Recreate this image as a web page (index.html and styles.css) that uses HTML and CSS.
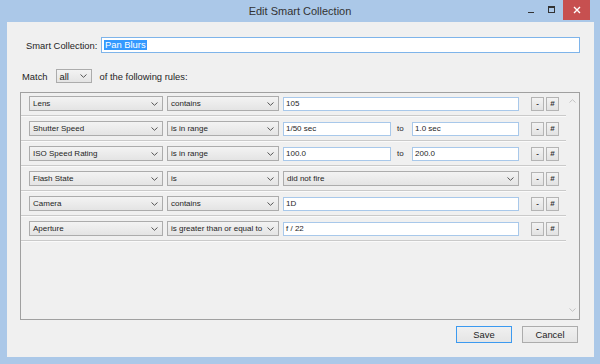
FILE: index.html
```html
<!DOCTYPE html>
<html lang="en">
  <head>
    <meta charset="utf-8" />
    <title>Edit Smart Collection</title>
    <link rel="stylesheet" href="styles.css">
  </head>
  <body>
    <div class="window">
      <div class="titlebar">
        <span></span>
        <span class="title">Edit Smart Collection</span>
        <div class="controls">
          <span class="ctl"><span class="min"></span></span>
          <span class="ctl"><span class="max"></span></span>
          <span class="ctl close">
            <svg width="8" height="8" viewBox="0 0 8 8"><path d="M1 1L7 7M7 1L1 7" stroke="#fff" stroke-width="1.4" /></svg>
          </span>
        </div>
      </div>

      <div class="client">
        <div class="name-row">
          <label class="name-label">Smart Collection:</label>
          <div class="textbox name-box"><span class="selected">Pan Blurs</span></div>
        </div>

        <div class="match-row">
          <span>Match</span>
          <div class="dropdown match-box">
            <span>all</span>
            <svg class="chev" width="7" height="4" viewBox="0 0 7 4"><path d="M0.5 0.5L3.5 3.3L6.5 0.5" fill="none" stroke="#555" /></svg>
          </div>
          <span>of the following rules:</span>
        </div>

        <div class="rules">
          <div class="rule-list">
            <div class="rule">
              <div class="dropdown field"><span>Lens</span><svg class="chev" width="7" height="4" viewBox="0 0 7 4"><path d="M0.5 0.5L3.5 3.3L6.5 0.5" fill="none" stroke="#555" /></svg></div>
              <div class="dropdown op"><span>contains</span><svg class="chev" width="7" height="4" viewBox="0 0 7 4"><path d="M0.5 0.5L3.5 3.3L6.5 0.5" fill="none" stroke="#555" /></svg></div>
              <div class="value"><div class="textbox wide">105</div></div>
              <div class="rule-btns"><span class="mini">-</span><span class="mini">#</span></div>
            </div>
            <div class="rule">
              <div class="dropdown field"><span>Shutter Speed</span><svg class="chev" width="7" height="4" viewBox="0 0 7 4"><path d="M0.5 0.5L3.5 3.3L6.5 0.5" fill="none" stroke="#555" /></svg></div>
              <div class="dropdown op"><span>is in range</span><svg class="chev" width="7" height="4" viewBox="0 0 7 4"><path d="M0.5 0.5L3.5 3.3L6.5 0.5" fill="none" stroke="#555" /></svg></div>
              <div class="value">
                <div class="textbox from">1/50 sec</div>
                <span class="to">to</span>
                <div class="textbox until">1.0 sec</div>
              </div>
              <div class="rule-btns"><span class="mini">-</span><span class="mini">#</span></div>
            </div>
            <div class="rule">
              <div class="dropdown field"><span>ISO Speed Rating</span><svg class="chev" width="7" height="4" viewBox="0 0 7 4"><path d="M0.5 0.5L3.5 3.3L6.5 0.5" fill="none" stroke="#555" /></svg></div>
              <div class="dropdown op"><span>is in range</span><svg class="chev" width="7" height="4" viewBox="0 0 7 4"><path d="M0.5 0.5L3.5 3.3L6.5 0.5" fill="none" stroke="#555" /></svg></div>
              <div class="value">
                <div class="textbox from">100.0</div>
                <span class="to">to</span>
                <div class="textbox until">200.0</div>
              </div>
              <div class="rule-btns"><span class="mini">-</span><span class="mini">#</span></div>
            </div>
            <div class="rule">
              <div class="dropdown field"><span>Flash State</span><svg class="chev" width="7" height="4" viewBox="0 0 7 4"><path d="M0.5 0.5L3.5 3.3L6.5 0.5" fill="none" stroke="#555" /></svg></div>
              <div class="dropdown op"><span>is</span><svg class="chev" width="7" height="4" viewBox="0 0 7 4"><path d="M0.5 0.5L3.5 3.3L6.5 0.5" fill="none" stroke="#555" /></svg></div>
              <div class="value"><div class="dropdown wide"><span>did not fire</span><svg class="chev" width="7" height="4" viewBox="0 0 7 4"><path d="M0.5 0.5L3.5 3.3L6.5 0.5" fill="none" stroke="#555" /></svg></div></div>
              <div class="rule-btns"><span class="mini">-</span><span class="mini">#</span></div>
            </div>
            <div class="rule">
              <div class="dropdown field"><span>Camera</span><svg class="chev" width="7" height="4" viewBox="0 0 7 4"><path d="M0.5 0.5L3.5 3.3L6.5 0.5" fill="none" stroke="#555" /></svg></div>
              <div class="dropdown op"><span>contains</span><svg class="chev" width="7" height="4" viewBox="0 0 7 4"><path d="M0.5 0.5L3.5 3.3L6.5 0.5" fill="none" stroke="#555" /></svg></div>
              <div class="value"><div class="textbox wide">1D</div></div>
              <div class="rule-btns"><span class="mini">-</span><span class="mini">#</span></div>
            </div>
            <div class="rule">
              <div class="dropdown field"><span>Aperture</span><svg class="chev" width="7" height="4" viewBox="0 0 7 4"><path d="M0.5 0.5L3.5 3.3L6.5 0.5" fill="none" stroke="#555" /></svg></div>
              <div class="dropdown op"><span>is greater than or equal to</span><svg class="chev" width="7" height="4" viewBox="0 0 7 4"><path d="M0.5 0.5L3.5 3.3L6.5 0.5" fill="none" stroke="#555" /></svg></div>
              <div class="value"><div class="textbox wide">f / 22</div></div>
              <div class="rule-btns"><span class="mini">-</span><span class="mini">#</span></div>
            </div>
          </div>
          <div class="scrollbar">
            <svg width="7" height="4" viewBox="0 0 7 4"><path d="M0.5 3.5L3.5 0.7L6.5 3.5" fill="none" stroke="#c4c4c4" /></svg>
            <svg width="7" height="4" viewBox="0 0 7 4"><path d="M0.5 0.5L3.5 3.3L6.5 0.5" fill="none" stroke="#c4c4c4" /></svg>
          </div>
        </div>

        <div class="actions">
          <button class="btn primary">Save</button>
          <button class="btn">Cancel</button>
        </div>
      </div>
    </div>
  </body>
</html>
```

FILE: styles.css
```css
html,
body {
  margin: 0;
  height: 100%;
}
body {
  font-family: "Liberation Sans", Arial, sans-serif;
  color: #1e1e1e;
}

.window {
  height: 364px;
  background-color: #abc8e8;
  display: flex;
  flex-direction: column;
}

/* title bar */
.titlebar {
  height: 22px;
  display: grid;
  grid-template-columns: 1fr auto 1fr;
  align-items: start;
}
.title {
  font-size: 11px;
  line-height: 22px;
  color: #333;
}
.controls {
  display: flex;
  justify-content: flex-end;
  padding-right: 10px;
}
.ctl {
  width: 20px;
  height: 20px;
  display: flex;
  align-items: center;
  justify-content: center;
}
.min {
  width: 6px;
  height: 1px;
  margin-top: 5px;
  background-color: #333;
}
.max {
  width: 5px;
  height: 4px;
  margin-top: -2px;
  border: 1px solid #333;
  border-top-width: 2px;
}
.ctl.close {
  width: 27px;
  margin-left: 2px;
  background-color: #c75050;
}

/* client area */
.client {
  flex: 1;
  margin: 0 6px 7px 7px;
  background-color: #f0f0f0;
  display: flex;
  flex-direction: column;
  font-size: 9.4px;
}

.name-row {
  display: flex;
  align-items: center;
  margin: 15px 14px 0 19px;
  height: 16px;
}
.name-label {
  width: 75px;
  flex: none;
}
.textbox {
  box-sizing: border-box;
  background-color: #fff;
  border: 1px solid #a8c8ea;
  display: flex;
  align-items: center;
  padding-left: 2px;
}
.name-box {
  flex: 1;
  height: 16px;
  border-color: #7eb4ea;
}
.selected {
  background-color: #3399ff;
  color: #fff;
  padding: 0 1px;
  line-height: 10px;
}

.match-row {
  display: flex;
  align-items: center;
  gap: 8px;
  margin: 16px 0 0 15px;
  height: 14px;
}

.dropdown {
  box-sizing: border-box;
  height: 15px;
  border: 1px solid #acacac;
  background: linear-gradient(#f3f3f3, #e4e4e4);
  display: flex;
  align-items: center;
  justify-content: space-between;
  gap: 4px;
  padding: 0 4px 0 3px;
  white-space: nowrap;
  overflow: hidden;
}
.chev {
  flex: none;
}
.match-box {
  width: 36px;
  height: 14px;
}

/* rules panel */
.rules {
  margin: 9px 14px 0 13px;
  height: 228px;
  box-sizing: border-box;
  border: 1px solid #a0a0a0;
  display: flex;
}
.rule-list {
  flex: 1;
}
.rule {
  display: flex;
  align-items: center;
  padding: 5px 0 4px 8px;
  border-bottom: 1px solid #cacaca;
  box-shadow: 0 1px 0 #fafafa;
  font-size: 8px;
}
.rule:first-child {
  padding-top: 3px;
}
.field {
  width: 134px;
}
.op {
  width: 112px;
  margin-left: 4px;
}
.value {
  width: 236px;
  margin-left: 4px;
  display: flex;
  align-items: center;
}
.value .textbox {
  height: 14px;
}
.wide {
  width: 236px;
}
.from {
  width: 108px;
}
.to {
  width: 15px;
  padding-left: 6px;
}
.until {
  width: 107px;
}
.rule-btns {
  display: flex;
  gap: 2px;
  margin-left: 12px;
}
.mini {
  box-sizing: border-box;
  width: 13px;
  height: 14px;
  border: 1px solid #b4b4b4;
  background: linear-gradient(#f3f3f3, #e2e2e2);
  display: flex;
  align-items: center;
  justify-content: center;
  font-size: 8px;
  font-weight: bold;
  color: #333;
}

.scrollbar {
  width: 13px;
  display: flex;
  flex-direction: column;
  justify-content: space-between;
  align-items: center;
  padding: 6px 0 7px;
}

/* bottom buttons */
.actions {
  display: flex;
  justify-content: flex-end;
  gap: 10px;
  margin: 6px 16px 0 0;
}
.btn {
  width: 56px;
  height: 17px;
  padding: 0;
  font-family: inherit;
  font-size: 9.4px;
  color: #1e1e1e;
  border: 1px solid #acacac;
  background: linear-gradient(#f0f0f0, #e5e5e5);
}
.btn.primary {
  border-color: #3c9af0;
}
```
